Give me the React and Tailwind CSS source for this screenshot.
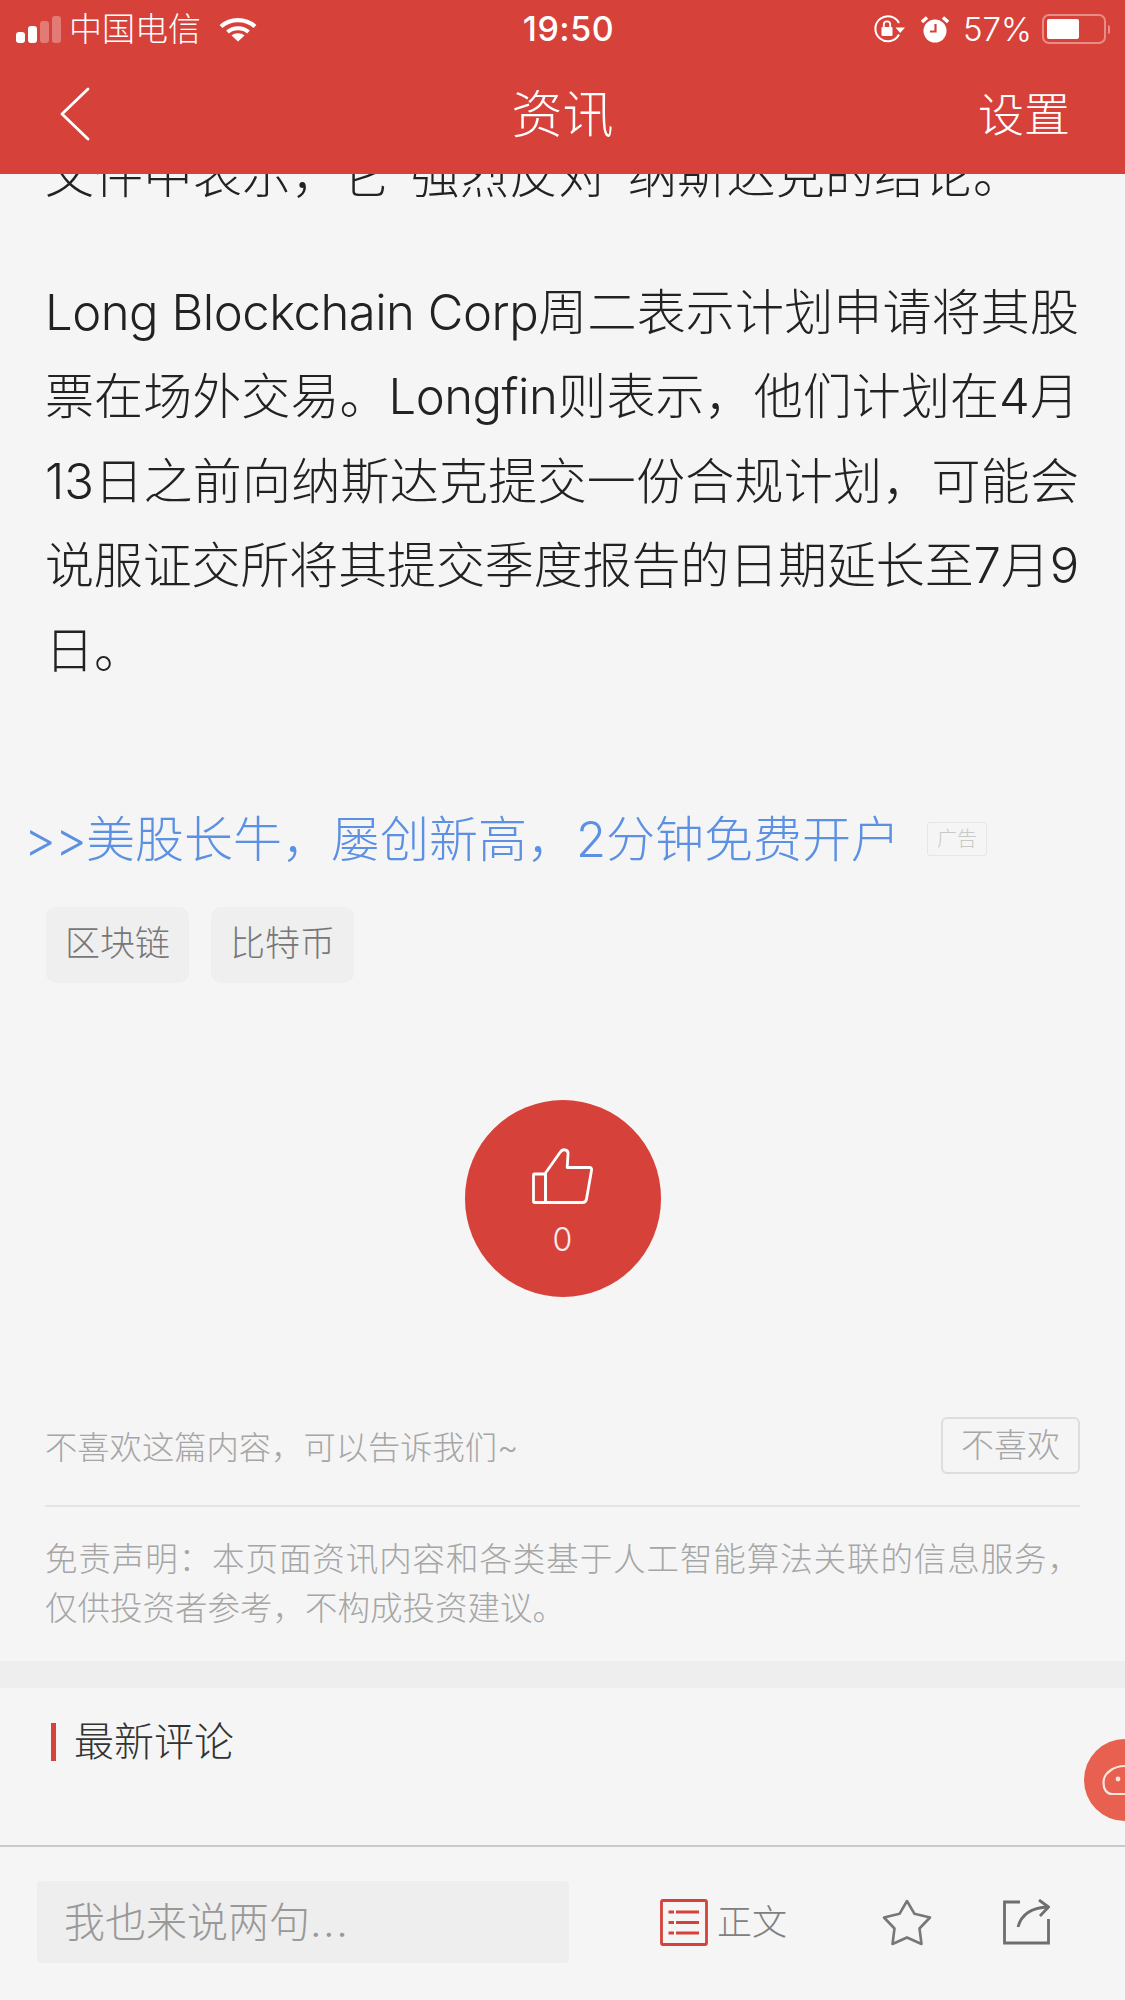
const RED = "#d6423a";

function SignalBars() {
  return (
    <div className="flex items-end gap-[3px]">
      <span className="h-[11px] w-[9px] rounded-[3px] bg-white" />
      <span className="h-[17px] w-[9px] rounded-[3px] bg-white" />
      <span className="h-[22px] w-[9px] rounded-[3px] bg-white/30" />
      <span className="h-[27px] w-[9px] rounded-[3px] bg-white/30" />
    </div>
  );
}

function WifiIcon() {
  return (
    <svg width="38" height="25" viewBox="0 0 38 25" fill="none" stroke="white" strokeWidth="4.2">
      <path d="M2 9.5C11.5 1 26.5 1 36 9.5" />
      <path d="M8.5 15C14.5 10 23.5 10 29.5 15" />
      <path d="M19 24.5L12.5 18.5C16 15.5 22 15.5 25.5 18.5Z" fill="white" stroke="none" />
    </svg>
  );
}

function RotationLock() {
  return (
    <svg width="33" height="28" viewBox="0 0 33 28" fill="none">
      <path d="M26 19.5A12.5 12.5 0 1 1 26 8" stroke="white" strokeWidth="2" />
      <path d="M22.5 12.5H32L27.2 18Z" fill="white" />
      <rect x="8.5" y="12" width="11" height="9" rx="1" fill="white" />
      <path d="M10.8 12V9.6a3.2 3.2 0 0 1 6.4 0V12" stroke="white" strokeWidth="1.8" />
    </svg>
  );
}

function AlarmIcon() {
  return (
    <svg width="28" height="27" viewBox="0 0 28 27" fill="none">
      <circle cx="14" cy="15" r="11.5" fill="white" />
      <path d="M14.5 8V15.5H9" stroke={RED} strokeWidth="2.2" />
      <path d="M1 6L6 1.5" stroke="white" strokeWidth="3.4" />
      <path d="M27 6L22 1.5" stroke="white" strokeWidth="3.4" />
    </svg>
  );
}

function Battery() {
  return (
    <div className="flex items-center gap-[2px]">
      <div className="h-[30px] w-[64px] rounded-[7px] border-2 border-white/40 p-[3px]">
        <div className="h-full w-[32px] rounded-[2px] bg-white" />
      </div>
      <span className="h-[9px] w-[2px] rounded-r-full bg-white/40" />
    </div>
  );
}

function StatusBar() {
  return (
    <div className="grid h-[54px] grid-cols-[1fr_auto_1fr] items-center pt-[4px] text-white">
      <div className="flex items-center pl-[16px]">
        <SignalBars />
        <span className="ml-[8px] text-[33px] leading-none font-light">中国电信</span>
        <span className="ml-[18px]"><WifiIcon /></span>
      </div>
      <div className="pl-[12px] text-[34px] leading-none font-medium tracking-[0.5px]">19:50</div>
      <div className="flex items-center justify-end pr-[15px]">
        <RotationLock />
        <span className="ml-[15px]"><AlarmIcon /></span>
        <span className="ml-[14px] text-[33px] leading-none font-light">57%</span>
        <span className="ml-[10px]"><Battery /></span>
      </div>
    </div>
  );
}

function Header() {
  return (
    <header className="z-10 h-[174px] shrink-0 bg-[#d6423a]">
      <StatusBar />
      <div className="grid h-[120px] grid-cols-[1fr_auto_1fr] items-center text-white">
        <div className="pl-[59px]">
          <svg width="31" height="54" viewBox="0 0 31 54" fill="none" stroke="white" strokeWidth="2.8" strokeLinecap="round" strokeLinejoin="round">
            <path d="M29 2L3 27L29 52" />
          </svg>
        </div>
        <div className="text-[51px] leading-none font-light">资讯</div>
        <div className="pr-[55px] text-right text-[46px] leading-none font-light">设置</div>
      </div>
    </header>
  );
}

function Article() {
  return (
    <div className="pr-[46px] pl-[45px] text-[49px] leading-[84.5px] font-light text-[#222]">
      <p className="mt-[-40px] tracking-[0.3px] whitespace-nowrap">文件中表示，它“强烈反对”纳斯达克的结论。</p>
      <div className="mt-[52px] whitespace-nowrap">
        <p className="[text-align-last:justify]"><span className="tracking-[-0.5px]">Long Blockchain Corp</span>周二表示计划申请将其股</p>
        <p className="[text-align-last:justify]">票在场外交易。<span className="tracking-[-0.5px]">Longfin</span>则表示，他们计划在4月</p>
        <p className="[text-align-last:justify]">13日之前向纳斯达克提交一份合规计划，可能会</p>
        <p className="tracking-[-0.2px] [text-align-last:justify]">说服证交所将其提交季度报告的日期延长至7月9</p>
        <p>日。</p>
      </div>
    </div>
  );
}

function Promo() {
  return (
    <div className="mt-[116px] flex h-[60px] items-center pl-[24px]">
      <span className="text-[49px] leading-none font-light whitespace-nowrap text-[#5b90e2]"><span className="tracking-[-1px]">&gt;&gt;</span>美股长牛，屡创新高，2分钟免费开户</span>
      <span className="ml-[27px] flex h-[34px] w-[60px] items-center justify-center rounded-[3px] border border-[#e6e6e6] text-[20px] leading-none font-light text-[#c8c8c8]">广告</span>
    </div>
  );
}

function Tags() {
  return (
    <div className="mt-[38px] flex gap-[22px] pl-[46px]">
      {["区块链", "比特币"].map((tag) => (
        <span key={tag} className="flex h-[76px] w-[143px] items-center justify-center rounded-[10px] bg-[#efefef] pb-[4px] text-[35px] leading-none font-light text-[#777]">{tag}</span>
      ))}
    </div>
  );
}

function LikeButton() {
  return (
    <div className="mt-[117px] flex justify-center">
      <button type="button" className="flex h-[197px] w-[196px] flex-col items-center rounded-full bg-[#d6423a] pt-[48px] text-white">
        <svg width="61" height="56" viewBox="0 0 61 56" fill="none" stroke="white" strokeWidth="2.8" strokeLinejoin="round">
          <rect x="1.5" y="26" width="12" height="28.5" rx="1" />
          <path d="M13.5 54.5V25L28 4.5Q30 1.5 33 1.8Q36.5 2.3 36 6.5L35.2 19.5H57.5Q60 19.5 59.5 22.5L54.5 51Q54 54.5 50.5 54.5Z" />
        </svg>
        <span className="mt-[20px] text-[32px] leading-none font-light text-white/90">0</span>
      </button>
    </div>
  );
}

function Feedback() {
  return (
    <div className="pr-[45px] pl-[45px]">
      <div className="mt-[120px] flex items-center justify-between pb-[31px]">
        <span className="pt-[6px] text-[32.3px] leading-none font-light text-[#a6a6a6]">不喜欢这篇内容，可以告诉我们~</span>
        <button type="button" className="h-[57px] w-[139px] rounded-[6px] border-2 border-[#dddddd] text-[33px] leading-none font-light text-[#a6a6a6]">不喜欢</button>
      </div>
      <div className="h-[2px] bg-[#e4e4e4]" />
      <div className="mt-[28px] text-[32.5px] leading-[49px] font-light whitespace-nowrap text-[#a6a6a6]">
        <p className="[text-align-last:justify]">免责声明：本页面资讯内容和各类基于人工智能算法关联的信息服务，</p>
        <p>仅供投资者参考，不构成投资建议。</p>
      </div>
    </div>
  );
}

function CommentsHeading() {
  return (
    <div className="mt-[35px] flex h-[38px] items-center pl-[51px]">
      <span className="h-full w-[5px] bg-[#d6423a]" />
      <h2 className="ml-[18px] text-[40px] leading-none font-light text-[#333]">最新评论</h2>
    </div>
  );
}

function ListIcon() {
  return (
    <svg width="48" height="47" viewBox="0 0 48 47" fill="none" stroke="#d6423a" strokeWidth="2.8">
      <rect x="1.5" y="1.5" width="45" height="44" rx="1.5" />
      <path d="M8.5 13H14M16 13H39M8.5 23.5H14M16 23.5H39M8.5 34H14M16 34H39" />
    </svg>
  );
}

function StarIcon() {
  return (
    <svg width="50" height="47" viewBox="0 0 50 47" fill="none" stroke="#777" strokeWidth="2.6" strokeLinejoin="round">
      <path d="M25 2L32.5 14.8L48 18.5L37.5 29.5L39.5 45L25 38.5L10.5 45L12.5 29.5L2 18.5L17.5 14.8Z" />
    </svg>
  );
}

function ShareIcon() {
  return (
    <svg width="47" height="46" viewBox="0 0 47 46" fill="none" stroke="#6e6e6e" strokeWidth="2.8">
      <path d="M17 3H1.5V44H45.5V20" />
      <path d="M15 28Q20 9 45 8" />
      <path d="M36 1L45.5 8L37 17" />
    </svg>
  );
}

function BottomBar() {
  return (
    <footer className="flex h-[155px] shrink-0 items-center border-t-2 border-[#c9c9c9] pb-[3px] pl-[37px]">
      <div className="flex h-[82px] w-[532px] items-center rounded-[4px] bg-[#eeeeee] pl-[27px] text-[41px] leading-none font-light text-[#999]">我也来说两句<span className="tracking-[1.5px]">...</span></div>
      <div className="ml-[91px] flex items-center">
        <ListIcon />
        <span className="ml-[9px] text-[35px] leading-none font-light text-[#808080]">正文</span>
      </div>
      <div className="ml-[95px]"><StarIcon /></div>
      <div className="ml-[71px]"><ShareIcon /></div>
    </footer>
  );
}

function FloatingRobot() {
  return (
    <div className="absolute top-[1739px] left-[1084px] flex h-[82px] w-[82px] items-center rounded-full bg-[#e8604f] pl-[18px]">
      <svg width="40" height="32" viewBox="0 0 40 32" fill="none" stroke="#fbe4df" strokeWidth="2.2">
        <path d="M1.5 19C1.5 12 5 9 9 6C13 3 17 2 24 2H39V30H10C4.5 30 1.5 25 1.5 19Z" />
        <circle cx="16" cy="15" r="2.4" fill="#fbe4df" stroke="none" />
      </svg>
    </div>
  );
}

export default function App() {
  return (
    <div className="relative flex h-[2000px] w-full flex-col overflow-hidden bg-[#f5f5f5] font-['Inter','Noto_Sans_CJK_SC',sans-serif]">
      <Header />
      <main className="min-h-0 flex-1">
        <Article />
        <Promo />
        <Tags />
        <LikeButton />
        <Feedback />
        <div className="mt-[28px] h-[27px] bg-[#eeeeee]" />
        <CommentsHeading />
      </main>
      <BottomBar />
      <FloatingRobot />
    </div>
  );
}
